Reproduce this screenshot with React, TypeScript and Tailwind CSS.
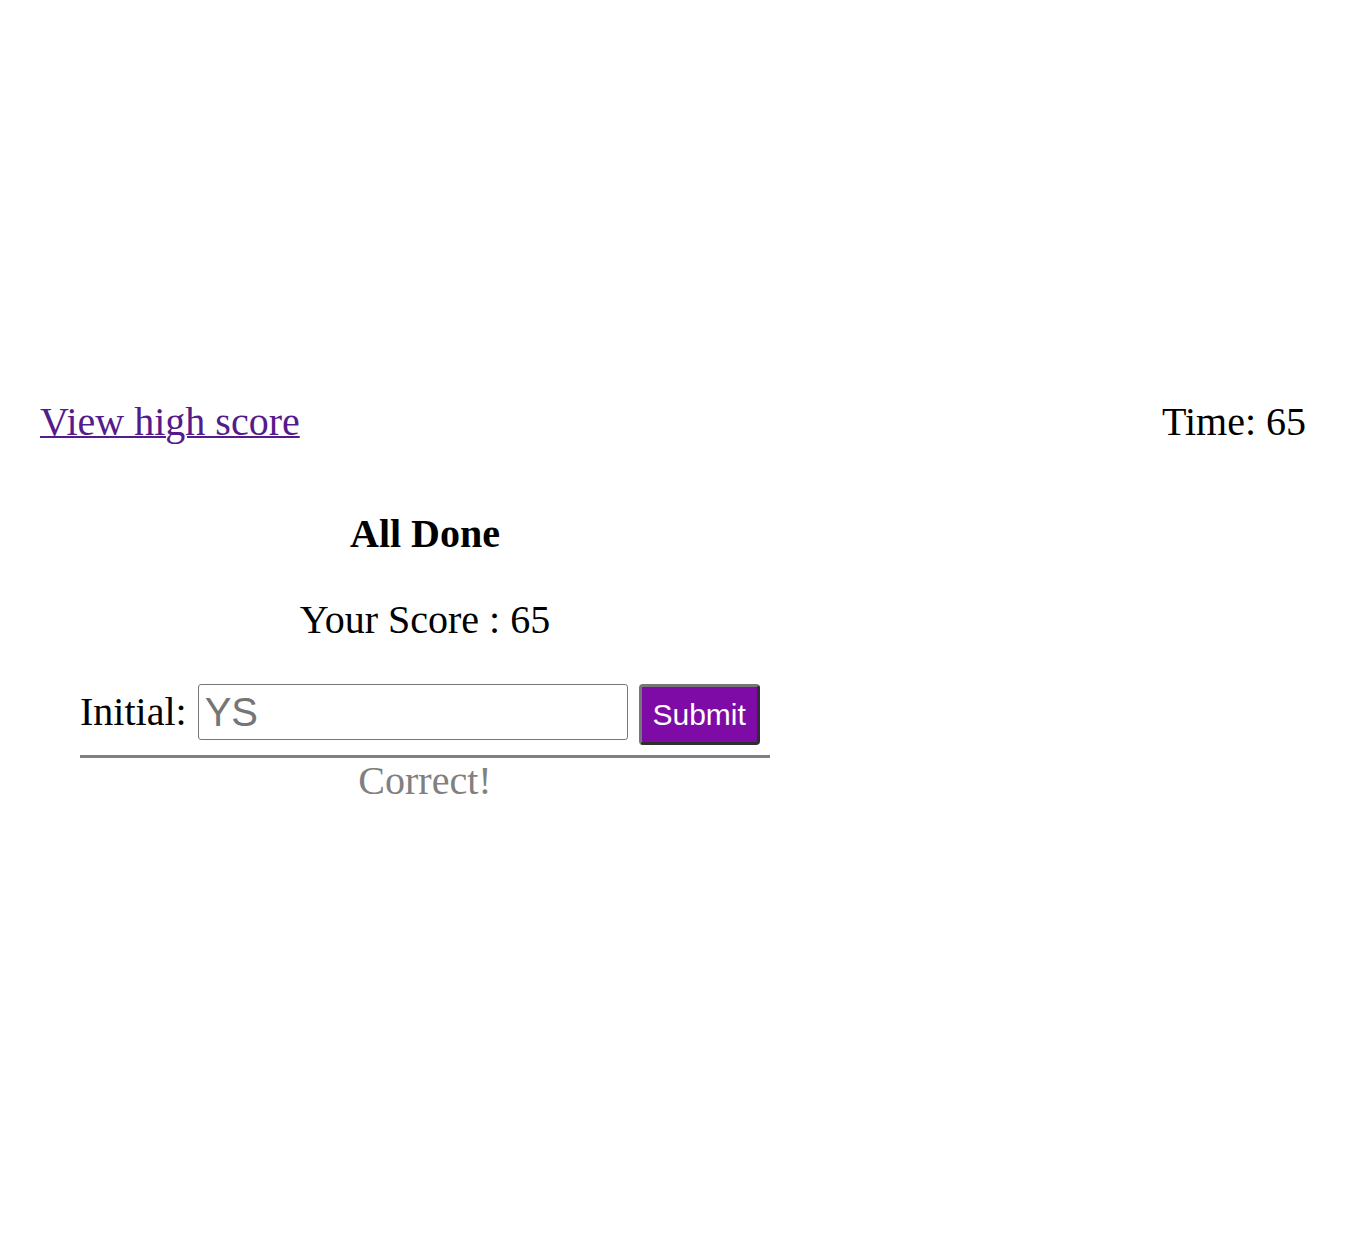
export default function App() {
  const serif = { fontFamily: '"Liberation Serif", "Times New Roman", serif' };

  return (
    <div className="min-h-[1244px] bg-white text-black" style={serif}>
      <header className="flex items-start justify-between px-10 pt-[399px] text-[40px] leading-[46px]">
        <a href="#" className="text-[#551a8b] underline decoration-2">
          View high score
        </a>
        <span>Time: 65</span>
      </header>

      <main className="ml-20 w-[690px]">
        <h2 className="mt-[66px] text-center text-[40px] font-bold leading-[46px]">
          All Done
        </h2>
        <p className="mt-10 text-center text-[40px] leading-[46px]">
          Your Score : 65
        </p>

        <form className="mt-[41px] flex items-start" onSubmit={(e) => e.preventDefault()}>
          <label className="mt-[5px] text-[40px] leading-[46px]" htmlFor="initial">
            Initial:
          </label>
          <input
            id="initial"
            placeholder="YS"
            className="ml-[11px] h-[56px] w-[430px] rounded-[3px] border border-[#767676] px-[6px] text-[40px] text-black outline-none placeholder:text-[#757575]"
            style={{ fontFamily: '"Liberation Sans", Arial, sans-serif' }}
          />
          <button
            type="submit"
            className="ml-[11px] h-[61px] w-[121px] rounded-[4px] border-[3px] border-t-[#767676] border-l-[#767676] border-r-[#2e2e2e] border-b-[#2e2e2e] bg-[#7f0ba7] text-[30px] text-white"
            style={{ fontFamily: '"Liberation Sans", Arial, sans-serif' }}
          >
            Submit
          </button>
        </form>

        <hr className="mt-[10px] h-[3px] border-0 bg-[#808080]" />
        <p className="text-center text-[40px] leading-[46px] text-[#808080]">Correct!</p>
      </main>
    </div>
  );
}
